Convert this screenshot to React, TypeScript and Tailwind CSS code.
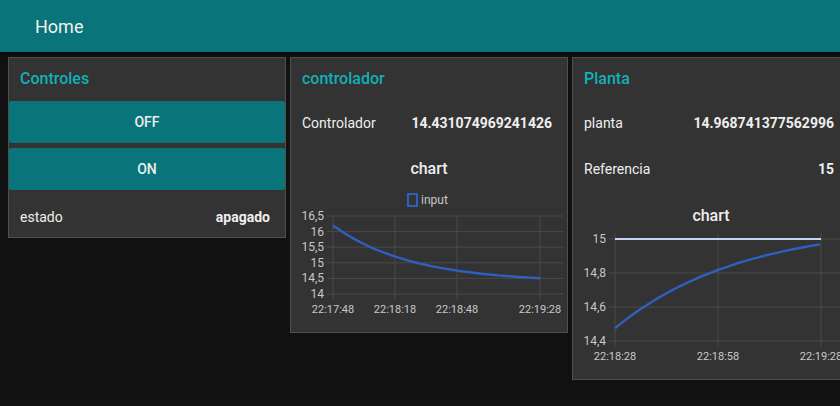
import React from "react";

const GRID = "#4a4a4a";
const LABEL = "#c8c8c8";
const BLUE = "#2f5fbf";

function pathFrom(points: [number, number][]) {
  return points.map((p, i) => `${i === 0 ? "M" : "L"}${p[0].toFixed(1)},${p[1].toFixed(1)}`).join(" ");
}

function ChartA() {
  const pts: [number, number][] = [];
  for (let t = 0; t <= 101; t += 2) {
    const v = 14.38 + 1.82 * Math.exp(-t / 37.6);
    pts.push([42 + t * 2.07, 146 - (v - 14) * 31.2]);
  }
  const ys = [
    { y: 68, l: "16,5" },
    { y: 83.6, l: "16" },
    { y: 99.2, l: "15,5" },
    { y: 114.8, l: "15" },
    { y: 130.4, l: "14,5" },
    { y: 146, l: "14" },
  ];
  const xs = [
    { x: 42, l: "22:17:48" },
    { x: 104, l: "22:18:18" },
    { x: 166, l: "22:18:48" },
    { x: 249, l: "22:19:28" },
  ];
  return (
    <svg width="276" height="184" className="block">
      <text x="138" y="26" textAnchor="middle" fill="#eeeeee" fontSize="16" fontWeight="500" fontFamily="Roboto, sans-serif">chart</text>
      <rect x="117" y="46" width="9" height="12" fill="#333" stroke={BLUE} strokeWidth="2" />
      <text x="130" y="56" fill={LABEL} fontSize="12" fontFamily="Roboto, sans-serif">input</text>
      {ys.map((g) => (
        <g key={g.l}>
          <line x1="36" x2="272" y1={g.y} y2={g.y} stroke={GRID} strokeWidth="1" />
          <text x="33" y={g.y + 4} textAnchor="end" fill={LABEL} fontSize="12" fontFamily="Roboto, sans-serif">{g.l}</text>
        </g>
      ))}
      {xs.map((g) => (
        <g key={g.l}>
          <line x1={g.x} x2={g.x} y1="68" y2="152" stroke={GRID} strokeWidth="1" />
          <text x={g.x} y="165" textAnchor="middle" fill={LABEL} fontSize="11" fontFamily="Roboto, sans-serif">{g.l}</text>
        </g>
      ))}
      <path d={pathFrom(pts)} fill="none" stroke={BLUE} strokeWidth="2.4" />
    </svg>
  );
}

function ChartB() {
  const pts: [number, number][] = [];
  for (let t = 0; t <= 60.5; t += 1.5) {
    const v = 15.09 - 0.615 * Math.exp(-t / 37);
    pts.push([42 + t * (205 / 60), 146 - (v - 14.4) * 170]);
  }
  const ys = [
    { y: 44, l: "15" },
    { y: 78, l: "14,8" },
    { y: 112, l: "14,6" },
    { y: 146, l: "14,4" },
  ];
  const xs = [
    { x: 42, l: "22:18:28" },
    { x: 145, l: "22:18:58" },
    { x: 248, l: "22:19:28" },
  ];
  return (
    <svg width="276" height="184" className="block">
      <text x="138" y="26" textAnchor="middle" fill="#eeeeee" fontSize="16" fontWeight="500" fontFamily="Roboto, sans-serif">chart</text>
      {ys.map((g) => (
        <g key={g.l}>
          <line x1="36" x2="276" y1={g.y} y2={g.y} stroke={GRID} strokeWidth="1" />
          <text x="33" y={g.y + 4} textAnchor="end" fill={LABEL} fontSize="12" fontFamily="Roboto, sans-serif">{g.l}</text>
        </g>
      ))}
      {xs.map((g) => (
        <g key={g.l}>
          <line x1={g.x} x2={g.x} y1="38" y2="152" stroke={GRID} strokeWidth="1" />
          <text x={g.x} y="165" textAnchor="middle" fill={LABEL} fontSize="11" fontFamily="Roboto, sans-serif">{g.l}</text>
        </g>
      ))}
      <line x1="42" x2="248" y1="44" y2="44" stroke="#c8d3f2" strokeWidth="2" />
      <path d={pathFrom(pts)} fill="none" stroke={BLUE} strokeWidth="2.4" />
    </svg>
  );
}

function Row({ label, value, className = "" }: { label: string; value: string; className?: string }) {
  return (
    <div className={`h-[40px] flex items-center justify-between pl-[11px] pr-[15px] text-[14px] text-[#eeeeee] ${className}`}>
      <span>{label}</span>
      <span className="font-bold">{value}</span>
    </div>
  );
}

export default function App() {
  return (
    <div className="w-[840px] h-[406px] bg-[#111111] overflow-hidden font-['Roboto',sans-serif]">
      <div className="h-[52px] bg-[#097479] flex items-center pl-[35px] shadow-[0_2px_4px_rgba(0,0,0,0.6)]">
        <span className="text-[18px] text-[#f2f2f2]">Home</span>
      </div>
      <div className="flex items-start gap-[4px] pl-[8px] pt-[5px]">
        <div className="w-[278px] shrink-0 bg-[#333333] border border-[#4f4f4f]">
          <div className="h-[43px] pt-[1px] pb-[2px] flex items-center pl-[11px] text-[16px] font-medium text-[#10b0b8]">Controles</div>
          <div className="h-[42px] bg-[#097479] rounded-[2px] flex items-center justify-center text-[14px] font-medium text-[#eeeeee]">OFF</div>
          <div className="h-[42px] mt-[5px] bg-[#097479] rounded-[2px] flex items-center justify-center text-[14px] font-medium text-[#eeeeee]">ON</div>
          <div className="pt-[7px]">
            <Row label="estado" value="apagado" />
          </div>
        </div>
        <div className="w-[278px] shrink-0 bg-[#333333] border border-[#4f4f4f]">
          <div className="h-[40px] pt-[2px] flex items-center pl-[11px] text-[16px] font-medium text-[#10b0b8]">controlador</div>
          <Row label="Controlador" value="14.431074969241426" className="mt-[5px]" />
          <div className="mt-[5px]">
            <ChartA />
          </div>
        </div>
        <div className="w-[278px] shrink-0 bg-[#333333] border border-[#4f4f4f]">
          <div className="h-[40px] pt-[2px] flex items-center pl-[11px] text-[16px] font-medium text-[#10b0b8]">Planta</div>
          <Row label="planta" value="14.968741377562996" className="mt-[5px]" />
          <Row label="Referencia" value="15" className="mt-[6px]" />
          <div className="mt-[6px]">
            <ChartB />
          </div>
        </div>
      </div>
    </div>
  );
}
